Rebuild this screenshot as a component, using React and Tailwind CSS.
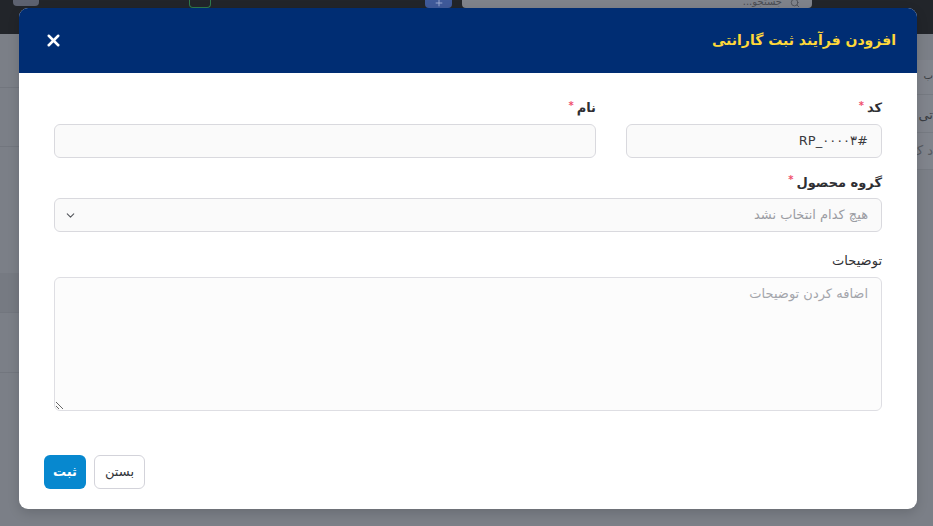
import { X, ChevronDown, Search, Plus } from 'lucide-react'

const font = { fontFamily: '"DejaVu Sans", "Noto Sans", sans-serif' }

function Label({ children, required, bold = true }) {
  return (
    <label className={`mb-[6px] flex items-center gap-[3px] text-[13px] text-[#2f2f33] ${bold ? 'font-bold' : ''}`}>
      {children}
      {required && <span className="-mt-[4px] text-[10px] leading-none text-[#f0506e]">*</span>}
    </label>
  )
}

function Backdrop() {
  return (
    <div className="flex h-[526px] w-[933px] flex-col bg-[#7b7f87]">
      <div className="flex h-[34px] items-start bg-[#22252a] px-[13px]">
        <div className="h-[6px] w-[26px] rounded-b-sm bg-[#5d6270]" />
        <div className="ml-[150px] h-[8px] w-[22px] rounded-b border border-t-0 border-[#2f7a4c]" />
        <div className="ml-[214px] flex h-[8px] w-[27px] items-end justify-center rounded-b bg-[#3f5a9a]">
          <Plus size={10} className="text-[#a9b6d8]" />
        </div>
        <div className="ml-[10px] flex h-[8px] w-[350px] items-end justify-end gap-2 overflow-hidden rounded-b bg-[#7f838b] px-3 text-[10px] leading-[12px] text-[#4a4d54]">
          <span dir="rtl">جستجو...</span>
          <Search size={10} />
        </div>
      </div>
      <div className="flex flex-1">
        <div className="flex w-[19px] flex-col">
          <div className="h-[54px] border-b border-[#72767e]" />
          <div className="h-[59px] border-b border-[#72767e]" />
          <div className="h-[126px]" />
          <div className="h-[40px] border-b border-[#72767e] bg-[#767a82]" />
          <div className="h-[60px] border-b border-[#72767e]" />
        </div>
        <div className="flex-1" />
        <div className="flex w-[16px] flex-col overflow-hidden whitespace-nowrap pt-[26px] text-[13px] text-[#3a3d43]" dir="rtl">
          <div className="h-[35px] border-b border-[#767a82] bg-[#80848c] pt-2 text-[10px]">ب</div>
          <div className="h-[38px] border-b border-[#767a82] bg-[#80848c] pt-[10px]">تی</div>
          <div className="h-[37px] border-b border-[#767a82] bg-[#80848c] pt-[8px] text-[#565a61]">د ک</div>
        </div>
      </div>
    </div>
  )
}

export default function App() {
  return (
    <div className="relative h-[526px] w-[933px] overflow-hidden" style={font}>
      <Backdrop />
      <div
        dir="rtl"
        className="absolute left-[19px] top-[8px] flex h-[501px] w-[898px] flex-col overflow-hidden rounded-[9px] bg-white shadow-[0_4px_12px_rgba(0,0,0,0.15)]"
      >
        <div className="flex h-[65px] shrink-0 items-center justify-between bg-[#002d73] pl-[25px] pr-[21px]">
          <h2 className="text-[14px] font-bold text-[#ffd83a]">افزودن فرآیند ثبت گارانتی</h2>
          <button className="text-white">
            <X size={19} strokeWidth={3.2} />
          </button>
        </div>

        <div className="flex flex-1 flex-col px-[35px] pt-[25px]">
          <div className="flex gap-[30px]">
            <div className="flex w-[256px] flex-col">
              <Label required>کد</Label>
              <input
                readOnly
                value="#RP_۰۰۰۰۳"
                className="h-[34px] rounded-[6px] border border-[#d9d9de] bg-[#fafafa] px-[13px] text-[13px] text-[#3b3b40] outline-none"
              />
            </div>
            <div className="flex flex-1 flex-col">
              <Label required>نام</Label>
              <input className="h-[34px] rounded-[6px] border border-[#d9d9de] bg-[#fafafa] px-[13px] text-[13px] outline-none" />
            </div>
          </div>

          <div className="mt-[15px] flex flex-col">
            <Label required>گروه محصول</Label>
            <div className="flex h-[34px] items-center justify-between rounded-[6px] border border-[#d9d9de] bg-[#fafafa] pl-[9px] pr-[13px]">
              <span className="text-[13px] text-[#9a9ca3]">هیچ کدام انتخاب نشد</span>
              <ChevronDown size={13} className="text-[#55575d]" />
            </div>
          </div>

          <div className="mt-[19px] flex flex-col">
            <Label bold={false}>توضیحات</Label>
            <textarea
              placeholder="اضافه کردن توضیحات"
              className="h-[134px] resize rounded-[6px] border border-[#dedee3] bg-[#fcfcfc] px-[13px] py-[6px] text-[13px] text-[#3b3b40] outline-none placeholder:text-[#a3a5ab]"
            />
          </div>
        </div>

        <div dir="ltr" className="flex shrink-0 items-center gap-[8px] pb-[20px] pl-[25px]">
          <button className="h-[34px] w-[42px] rounded-[6px] bg-[#0788cf] text-[13px] font-bold text-white">ثبت</button>
          <button className="h-[34px] w-[51px] rounded-[6px] border border-[#d3d3da] bg-white text-[13px] text-[#33353a]">بستن</button>
        </div>
      </div>
    </div>
  )
}
